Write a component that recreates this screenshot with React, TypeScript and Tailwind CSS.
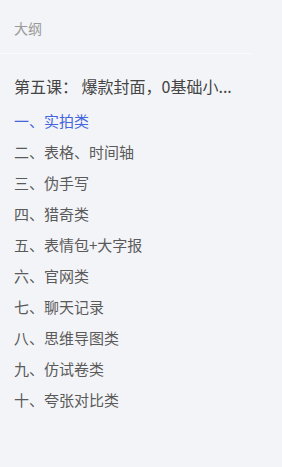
import React from 'react';

const items = [
  '一、实拍类',
  '二、表格、时间轴',
  '三、伪手写',
  '四、猎奇类',
  '五、表情包+大字报',
  '六、官网类',
  '七、聊天记录',
  '八、思维导图类',
  '九、仿试卷类',
  '十、夸张对比类',
];

export default function App() {
  return (
    <div
      className="w-[282px] h-[467px] bg-[#f3f4f7] overflow-hidden"
      style={{ fontFamily: '"Noto Sans CJK SC", "Noto Sans", sans-serif' }}
    >
      {/* header */}
      <div className="h-[54px] flex items-center px-[14px] border-b border-[#fafbfc] w-[252px]">
        <span className="text-[14px] text-[#9a9a9a] pt-[4px]">大纲</span>
      </div>

      <div className="px-[14px] pt-[20px]">
        <h3 className="text-[16px] leading-[24px] text-[#444444] whitespace-pre">
          {'第五课： 爆款封面，0基础小...'}
        </h3>
        <ul className="mt-[8px] flex flex-col">
          {items.map((item, idx) => (
            <li
              key={idx}
              className={`h-[31px] flex items-center text-[15px] ${
                idx === 0 ? 'text-[#4466dd]' : 'text-[#5a5a5a]'
              }`}
            >
              {item}
            </li>
          ))}
        </ul>
      </div>
    </div>
  );
}
